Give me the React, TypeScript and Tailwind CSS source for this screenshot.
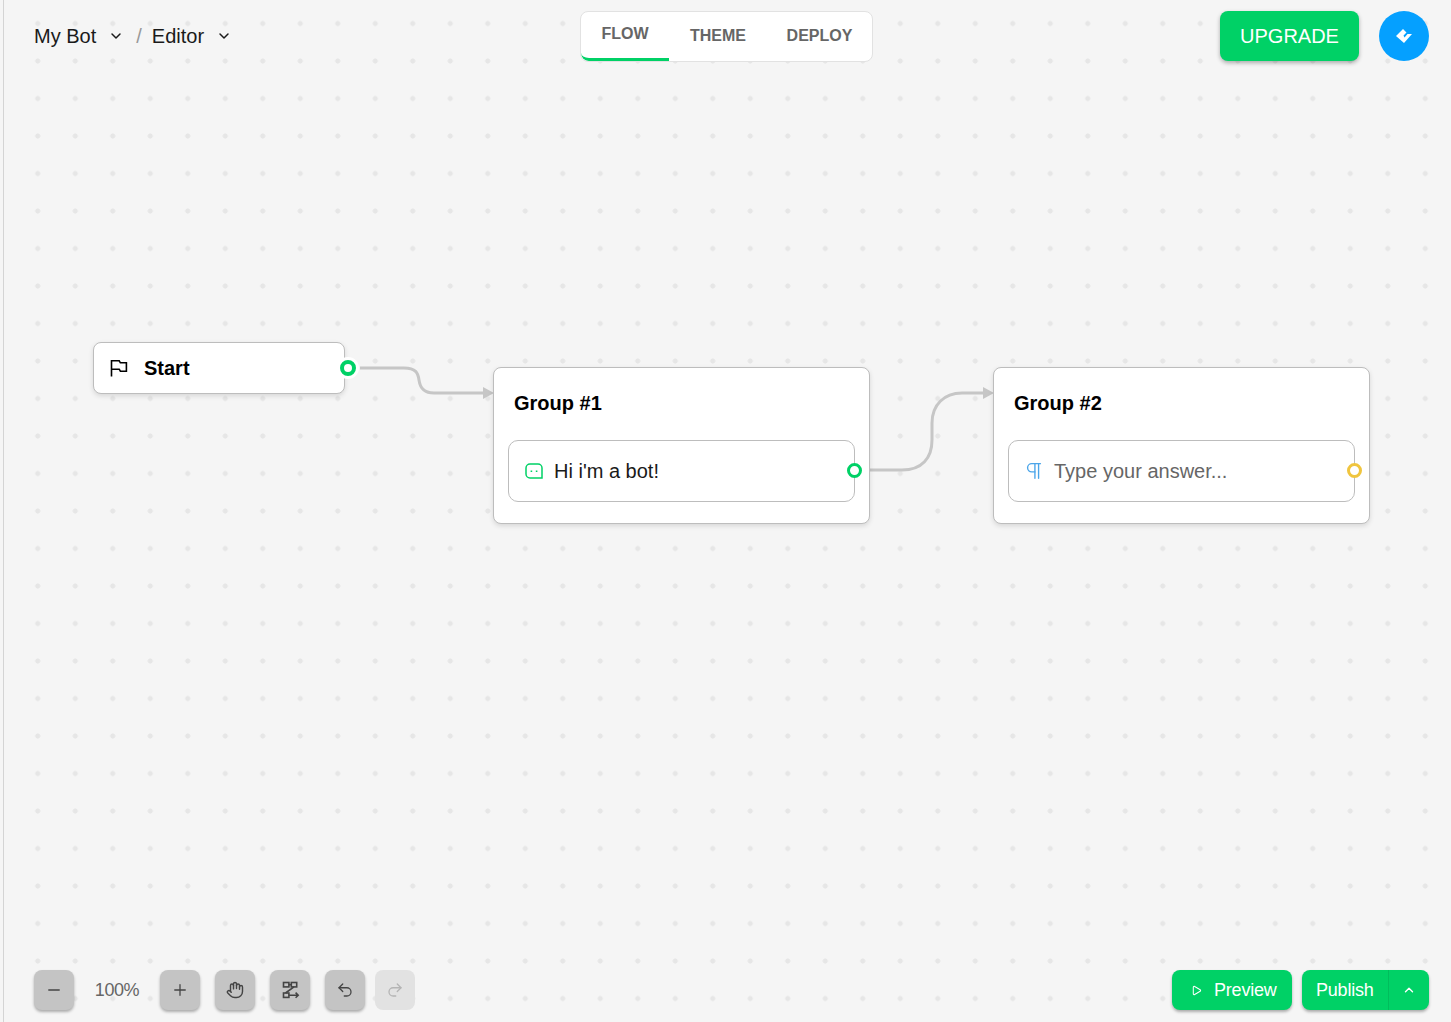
import { ChevronDown, ChevronUp, Hand, Minus, Pilcrow, Play, Plus, Redo2, Undo2 } from "lucide-react";
import type { ReactNode } from "react";

const FlagIcon = () => (
  <svg width="18" height="18" viewBox="0 0 18 18" fill="none" stroke="black" strokeWidth="1.6">
    <path d="M1.5 17.5V1.8h7.7l1.2 2h6v8.4h-6l-1.2-2H1.5" />
  </svg>
);

const RouteIcon = () => (
  <svg width="20" height="20" viewBox="0 0 20 20" fill="none" stroke="currentColor" strokeWidth="1.6">
    <rect x="3.5" y="2.5" width="5.4" height="4.4" />
    <path d="M8.9 4.7h2.4" />
    <rect x="11.3" y="2.5" width="5.4" height="4.4" />
    <rect x="3.5" y="13" width="5.4" height="4.4" />
    <path d="M14 6.9 5.5 13M8.9 15.2h9.3M15.6 12.6l2.6 2.6-2.6 2.6" />
  </svg>
);

const BotIcon = () => (
  <svg width="18" height="18" viewBox="0 0 18 18" fill="none" stroke="#00d166" strokeWidth="1.5">
    <path d="M5 2h8a4 4 0 0 1 4 4v10H5a4 4 0 0 1-4-4V6a4 4 0 0 1 4-4z" />
    <path d="M5.6 9.2h1.6M10.8 9.2h1.6" strokeWidth="1.6" />
  </svg>
);

const Logo = () => (
  <svg width="18" height="18" viewBox="0 0 18 18" fill="white">
    <path d="M8 2 11.5 5.5 8.5 8.5 9.5 10.5 12.5 7 17 7 9 16 1 9z" />
  </svg>
);

const ToolButton = ({ children, disabled }: { children: ReactNode; disabled?: boolean }) => (
  <button
    className={
      disabled
        ? "w-10 h-10 rounded-lg bg-[#e2e2e2] text-[#b4b4b4] flex items-center justify-center"
        : "w-10 h-10 rounded-lg bg-[#c4c4c4] text-[#444444] shadow-[0_2px_3px_rgba(0,0,0,0.3)] flex items-center justify-center"
    }
  >
    {children}
  </button>
);

const Port = ({ color }: { color: string }) => (
  <span className={`absolute right-[-8px] top-[22px] w-[15px] h-[15px] rounded-full bg-white border-[3px] ${color}`} />
);

const GroupNode = ({
  left,
  title,
  icon,
  text,
  textColor,
  portColor,
}: {
  left: string;
  title: string;
  icon: ReactNode;
  text: string;
  textColor: string;
  portColor: string;
}) => (
  <div
    className={`absolute ${left} top-[367px] w-[377px] h-[157px] bg-white border border-[#bdbdbd] rounded-lg shadow-[0_2px_5px_rgba(0,0,0,0.12)] px-[14px]`}
  >
    <div className="h-[72px] pl-[6px] pb-[2px] flex items-center text-[20px] leading-none font-bold text-black">{title}</div>
    <div className="relative h-[62px] border border-[#bdbdbd] rounded-[10px] flex items-center pl-4 gap-[11px]">
      <span className="w-[18px] flex justify-center">{icon}</span>
      <span className={`text-[20px] ${textColor}`}>{text}</span>
      <Port color={portColor} />
    </div>
  </div>
);

const App = () => {
  return (
    <div className="relative h-[1022px] w-[1451px] overflow-hidden bg-[#f5f5f5] font-['Liberation_Sans',Arial,sans-serif]">
      {/* dotted canvas */}
      <div className="absolute inset-y-0 left-[3px] right-0 border-l border-[#d4d4d4] bg-[radial-gradient(circle,#e6e6e6_2.4px,transparent_2.7px)] bg-[size:37.5px_37.5px] bg-[position:15px_4.75px]" />

      <svg className="absolute inset-0" width="1451" height="1022" fill="none">
        <path d="M360 368h44c12 0 14 5 15 12s4 13 15 13h52" stroke="#c6c6c6" strokeWidth="3" />
        <path d="M483 387l11 6-11 6z" fill="#c6c6c6" />
        <path d="M870 470h32c20 0 30-12 30-30v-17c0-18 12-30 30-30h24" stroke="#c6c6c6" strokeWidth="3" />
        <path d="M983 387l11 6-11 6z" fill="#c6c6c6" />
      </svg>

      {/* nodes */}
      <div className="absolute left-[93px] top-[342px] w-[252px] h-[52px] bg-white border border-[#bdbdbd] rounded-lg shadow-[0_2px_5px_rgba(0,0,0,0.12)] flex items-center pl-[16px] gap-[16px]">
        <FlagIcon />
        <span className="text-[20px] font-bold text-black">Start</span>
        <span className="absolute right-[-15px] top-[14px] w-[22px] h-[22px] rounded-full bg-white flex items-center justify-center">
          <span className="w-[16px] h-[16px] rounded-full bg-white border-[4px] border-[#00d166]" />
        </span>
      </div>
      <GroupNode
        left="left-[493px]"
        title="Group #1"
        icon={<BotIcon />}
        text="Hi i'm a bot!"
        textColor="text-[#1a1a1a]"
        portColor="border-[#00d166]"
      />
      <GroupNode
        left="left-[993px]"
        title="Group #2"
        icon={<Pilcrow size={22} strokeWidth={1.5} className="shrink-0 text-[#4ba5e9]" />}
        text="Type your answer..."
        textColor="text-[#666666]"
        portColor="border-[#f0c53f]"
      />

      <div className="relative h-full flex flex-col justify-between pl-[34px] pr-[22px] pt-[11px] pb-3">
        <header className="flex items-start">
          <div className="w-[546px] h-[50px] flex items-center text-[20px] text-[#1a1a1a]">
            <span>My Bot</span>
            <ChevronDown size={16} strokeWidth={2.2} className="ml-[12px]" />
            <span className="ml-[12px] text-[#999999]">/</span>
            <span className="ml-[10px]">Editor</span>
            <ChevronDown size={16} strokeWidth={2.2} className="ml-[12px]" />
          </div>
          <nav className="h-[51px] flex rounded-lg border border-[#e2e2e2] bg-white text-[16px] font-bold text-[#666666] overflow-hidden">
            <div className="w-[88px] flex items-center justify-center pb-[2px] border-b-[3px] border-[#00d166] rounded-bl-lg">FLOW</div>
            <div className="w-[98px] flex items-center justify-center pb-[2px]">THEME</div>
            <div className="w-[105px] flex items-center justify-center pb-[2px]">DEPLOY</div>
          </nav>
          <div className="ml-auto flex items-center gap-5">
            <button className="w-[139px] h-[50px] rounded-lg bg-[#00d166] text-white text-[20px] shadow-[0_2px_4px_rgba(0,0,0,0.3)]">
              UPGRADE
            </button>
            <div className="w-[50px] h-[50px] rounded-full bg-[#05a0ff] flex items-center justify-center">
              <Logo />
            </div>
          </div>
        </header>

        <footer className="flex items-center justify-between">
          <div className="flex items-center">
            <ToolButton>
              <Minus size={18} strokeWidth={1.7} />
            </ToolButton>
            <span className="w-[86px] text-center text-[18px] tracking-[-0.4px] text-[#666666]">100%</span>
            <ToolButton>
              <Plus size={18} strokeWidth={1.7} />
            </ToolButton>
            <div className="ml-[15px] flex gap-[15px]">
              <ToolButton>
                <Hand size={18} strokeWidth={1.9} />
              </ToolButton>
              <ToolButton>
                <RouteIcon />
              </ToolButton>
              <ToolButton>
                <Undo2 size={18} strokeWidth={1.7} />
              </ToolButton>
            </div>
            <div className="ml-[10px]">
              <ToolButton disabled>
                <Redo2 size={18} strokeWidth={1.7} />
              </ToolButton>
            </div>
          </div>
          <div className="flex items-center gap-[10px] text-[18px] tracking-[-0.2px] text-white">
            <button className="w-[120px] h-10 rounded-lg bg-[#00d166] shadow-[0_2px_3px_rgba(0,0,0,0.3)] flex items-center pl-[19px] gap-[12px]">
              <Play size={11} strokeWidth={2.2} />
              <span>Preview</span>
            </button>
            <div className="w-[127px] h-10 rounded-lg bg-[#00d166] shadow-[0_2px_3px_rgba(0,0,0,0.3)] flex items-center">
              <span className="w-[87px] pl-[14px] h-full flex items-center border-r border-[#00bd5c]">Publish</span>
              <span className="flex-1 flex justify-center">
                <ChevronUp size={14} strokeWidth={2.4} />
              </span>
            </div>
          </div>
        </footer>
      </div>
    </div>
  );
};

export default App;
